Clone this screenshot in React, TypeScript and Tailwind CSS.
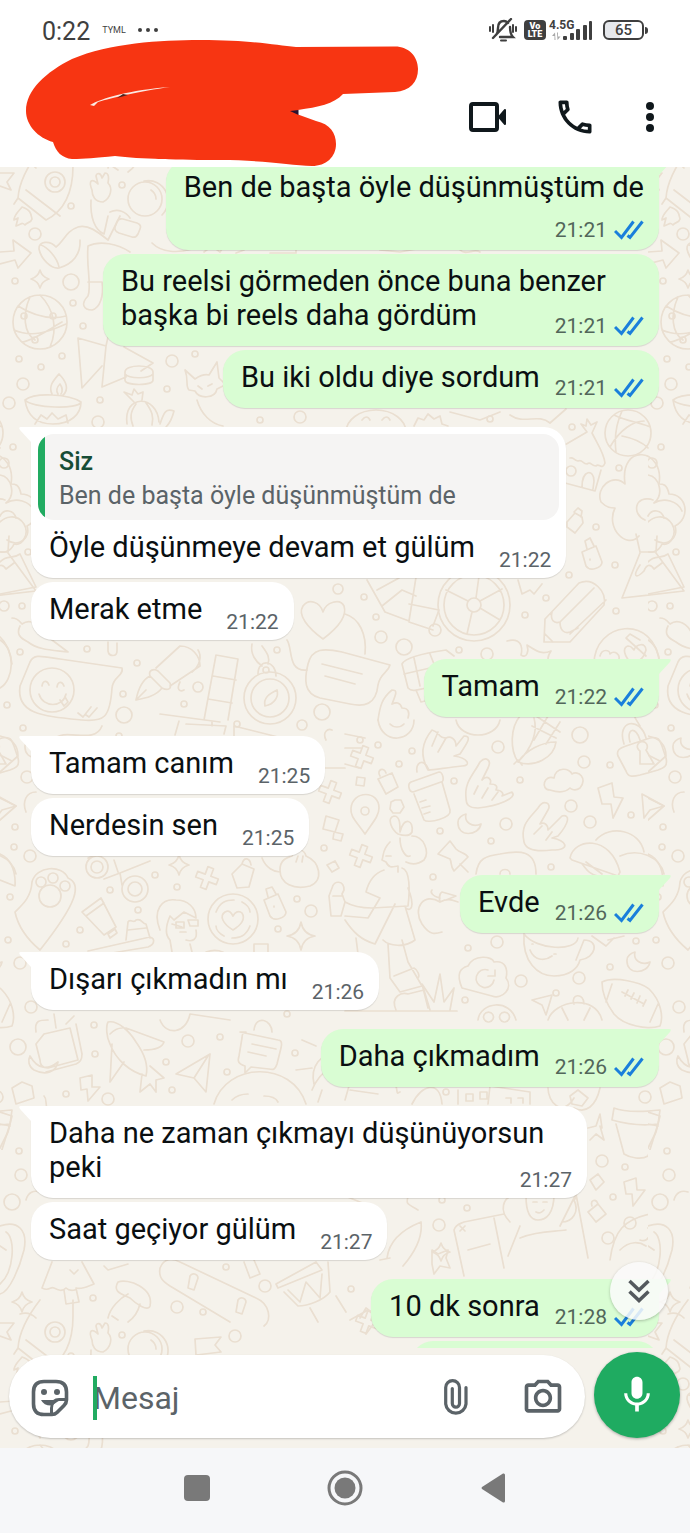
import React from 'react';
import { MdMic, MdOutlineCall, MdOutlinePhotoCamera } from 'react-icons/md';
import { clsx } from 'clsx';

interface Message {
  id: number;
  text: string;
  time: string;
  mine?: boolean;
  tail?: boolean;
  // time goes on a line of its own
  stacked?: boolean;
  quote?: { author: string; text: string };
}

const MESSAGES: Message[] = [
  { id: 1, text: 'Ben de başta öyle düşünmüştüm de', time: '21:21', mine: true, tail: true, stacked: true },
  { id: 2, text: 'Bu reelsi görmeden önce buna benzer başka bi reels daha gördüm', time: '21:21', mine: true },
  { id: 3, text: 'Bu iki oldu diye sordum', time: '21:21', mine: true },
  {
    id: 4,
    text: 'Öyle düşünmeye devam et gülüm',
    time: '21:22',
    tail: true,
    quote: { author: 'Siz', text: 'Ben de başta öyle düşünmüştüm de' }
  },
  { id: 5, text: 'Merak etme', time: '21:22' },
  { id: 6, text: 'Tamam', time: '21:22', mine: true, tail: true },
  { id: 7, text: 'Tamam canım', time: '21:25', tail: true },
  { id: 8, text: 'Nerdesin sen', time: '21:25' },
  { id: 9, text: 'Evde', time: '21:26', mine: true, tail: true },
  { id: 10, text: 'Dışarı çıkmadın mı', time: '21:26', tail: true },
  { id: 11, text: 'Daha çıkmadım', time: '21:26', mine: true, tail: true },
  { id: 12, text: 'Daha ne zaman çıkmayı düşünüyorsun peki', time: '21:27', tail: true },
  { id: 13, text: 'Saat geçiyor gülüm', time: '21:27' },
  { id: 14, text: '10 dk sonra', time: '21:28', mine: true, tail: true }
];

/* ---------- wallpaper ---------- */

// [x, y, radius]
const DOTS = [
  [71, 206, 3], [35, 234, 6], [122, 185, 3], [15, 281, 3], [71, 282, 8], [73, 303, 3], [83, 326, 3], [19, 359, 3],
  [62, 356, 3], [41, 367, 3], [23, 384, 6], [9, 403, 6], [100, 400, 3], [195, 354, 3], [172, 361, 6], [167, 389, 3],
  [98, 422, 6], [13, 447, 3], [4, 463, 5], [28, 552, 3], [4, 606, 5], [22, 606, 3], [20, 652, 3], [87, 649, 3],
  [137, 663, 3], [198, 687, 5], [123, 694, 3], [184, 704, 3], [7, 705, 3], [124, 715, 8], [237, 724, 3], [277, 650, 3],
  [338, 589, 5], [322, 712, 8], [490, 419, 3], [572, 427, 3], [619, 468, 3], [596, 527, 3], [615, 565, 3],
  [569, 575, 3], [546, 598, 3], [525, 615, 3], [616, 611, 3], [364, 597, 3], [376, 617, 3], [381, 637, 6],
  [404, 647, 8], [459, 650, 3], [487, 654, 6], [23, 728, 3], [119, 736, 3], [27, 777, 6], [15, 827, 3], [14, 847, 3],
  [30, 856, 6], [302, 725, 5], [10, 897, 3], [155, 875, 3], [110, 890, 3], [177, 887, 3], [138, 910, 3], [80, 930, 3],
  [66, 944, 3], [8, 940, 3], [297, 899, 3], [311, 911, 6], [278, 929, 3], [324, 848, 3], [20, 963, 6], [31, 1007, 6],
  [287, 1014, 3], [378, 745, 3], [412, 751, 3], [399, 764, 3], [454, 781, 3], [498, 747, 6], [580, 735, 8],
  [584, 762, 6], [610, 765, 3], [520, 780, 3], [506, 824, 6], [571, 806, 6], [590, 822, 6], [631, 815, 3],
  [491, 841, 3], [440, 831, 3], [433, 877, 3], [551, 867, 3], [497, 942, 6], [468, 948, 3], [636, 941, 3],
  [610, 967, 3], [521, 981, 6], [579, 978, 6], [556, 993, 3], [465, 1000, 3], [94, 1025, 3], [188, 1041, 6],
  [220, 1037, 3], [18, 1047, 8], [95, 1054, 3], [166, 1062, 3], [227, 1072, 3], [295, 1053, 3], [66, 1094, 3],
  [172, 1090, 3], [108, 1099, 6], [446, 1092, 3], [645, 1097, 6], [19, 1151, 3], [21, 1175, 6], [12, 1202, 8],
  [602, 1161, 6], [625, 1167, 3], [613, 1197, 3], [442, 1200, 3], [467, 1208, 3], [439, 1225, 6], [630, 1223, 6],
  [608, 1238, 6], [226, 1267, 3], [93, 1298, 3], [265, 1286, 6], [177, 1307, 6], [203, 1312, 3], [351, 1289, 3],
  [400, 240, 3], [600, 240, 3], [260, 420, 3], [300, 417, 6], [360, 740, 3], [235, 1336, 6]
];

// line shapes in absolute wallpaper coordinates
const LINES = [
  // star and rocket
  'M0 173l14 0-7 9 4 8-11-4',
  'M40 150C26 168 19 184 18 198L46 220C62 212 73 195 73 166V150M18 198l-4 6M26 190l34 26M65 182a10 10 0 1 1-20 0 10 10 0 0 1 20 0M60 182a5 5 0 1 1-10 0 5 5 0 0 1 10 0',
  'M22 207c-4 5-8 8-8 13l4-2-2 8c6-2 6-4 9-1 2-3 6-2 7-6-1-5-1-9-10-12z',
  // astronaut
  'M92 190C88 180 92 178 98 184L96 176c1-4 5-3 6 2l3-5c4 0 4 5 3 10 5 5 3 15-5 19-8 0-11-6-11-12z',
  'M162 199a17 17 0 1 1-34 0 17 17 0 0 1 34 0M144 181c20-4 32 20 18 34M151 190c3 2 5 5 5 9',
  'M91 200c-1 18 4 30 13 34l4-18M110 212c8-4 16 0 20 6M120 216l-12 24c-10-8-20-16-30-13-12 4-14 14-22 20-6-7-18-6-17 2 2 10 12 20 20 19 14-4 22-14 21-28',
  'M117 222q1-4 6-3l14 4q5 2 3 6l-2 5q-2 4-6 3l-13-4q-5-2-4-6zM41 245c6 2 16 12 18 22M88 246c12-6 30-2 42 6M88 246c-2 20 4 40 0 50-8 8-4 14 4 14 8-2 12-14 10-28h-14M152 243c10 10 26 10 40 6',
  // arrow, globe
  'M0 252L14 251 13 240 31 253 18 268 15 260 0 264',
  'M67 322a27 27 0 1 1-54 0 27 27 0 0 1 54 0M18 306c16 10 32 14 48 10M14 330c18 8 34 2 52-6M30 297c-8 18-6 36 5 43M40 295c14 14 18 34 10 52M22 342c12-2 26-12 40-20',
  'M27 316a3 3 0 1 1-6 0 3 3 0 0 1 6 0M56 316a3 3 0 1 1-6 0 3 3 0 0 1 6 0M38 340a3 3 0 1 1-6 0 3 3 0 0 1 6 0',
  // book, cup, oil lamp
  'M78 338l28 8-4 41 24-10M78 338l4 50 20-22M106 346l2-9M124 347l29 16-12 8M125 372c0-8 28-8 28 0v8c0 6-28 6-28 0zM125 374c4 5 24 5 28 0',
  'M25 400c10-8 44-6 56 2-2 8-50 6-56-2 2 14 10 24 28 24s28-10 28-22M52 394c-4-8 2-14 7-20 8 8 10 16 4 21M58 394c-3-5 0-8 2-10 2 3 3 7 1 10M35 424l6-9 6 4 5-6 6 6 8-4 2 8',
  // cactus, fox
  'M127 424c-4-30 30-30 32-2M134 402l-10-10 8 3 2-6 4 5 5-2-1 8M136 404c-6 8-6 14-3 22M146 403c6 8 8 14 6 22M160 424c4-12 6-16 14-13-2 8-4 12-8 16',
  'M185 370l10 9c6-4 10-5 14-4l8-13 2 16 8 8M185 370c4 10 0 16 4 20l6 1c4 8 20 8 22-2l6-3M198 386l4 3M208 386l4-2M197 400c4 14 14 24 26 26',
  // odds and ends around the outgoing messages
  'M204 252l8-6 8 6 4-6M244 250l-8 3M270 253h26v-6M380 250l20 2 22-4M460 250c6 6 14-2 20 2',
  // smiley, gear
  'M346 432a30 22 0 0 1 60 0M362 420c3-4 6-4 8 0M382 420c3-4 6-4 8 0M414 426l4-8 6 2 4-6 6 5 6-3 2 8 6 2M510 415c14 10 28-2 40 8l16-14M450 412l30 8 20-8',
  // basketball, house
  'M651 433a23 23 0 1 1-46 0 23 23 0 0 1 46 0M614 415c12 6 28 8 36 12M610 447c10-18 24-26 34-26M616 452c-2-16 0-28 6-41M622 436c10 2 20 6 26 12',
  'M563 446l24-14-6-8 5 2 1-7 4 6 6-3-5 11c6 12 12 20 13 30-3 8-6-1-9 3-5 0-5-5-9-2-5 0-4-5-9-3-5-1-4-4-8-3M601 470l-6 21-30-8M576 471a5 5 0 1 1-10 0 5 5 0 0 1 10 0M582 487c0-18 12-18 12-6l-1 8',
  // tree on a hill
  'M655 540c12 8 24-2 20-14 16-8 12-32-6-32-2-10-6-10-10-10 6-36-40-42-34 0-12-12-30 4-24 18 6 6 10 6 14 6-10 20 12 42 24 28M645 520c-14-6-10-26 8-20M648 516c4-8 14-6 16 2M636 534l4 18h16l1-16',
  'M640 553l-18 45 62-7-28-38M640 565c-8 12-4 14 4 6 2-6 6-8 10-2l8-6',
  // bottle tags
  'M567 522l8-9 7 4 1 6-8 10-8-6zM574 512l4-4 4 3-1 6M582 552l14-6 6 16c0 6-12 10-16 4zM587 549l-2-8 5-3 4 8M590 559v1',
  // microscope, wheel
  'M367 580l18 32 24 9 8-50M377 590l22-12M382 606l20-16 14 6M409 604l30 6-6 16M409 622l24 8M441 630a6 6 0 1 1-12 0 6 6 0 0 1 12 0',
  'M510 605a36 36 0 1 1-72 0 36 36 0 0 1 72 0M504 605a30 30 0 1 1-60 0 30 30 0 0 1 60 0M481 605a7 7 0 1 1-14 0 7 7 0 0 1 14 0M480 601l22-12M480 608l20 12M472 612l-5 22M468 601l-22-11M476 598l3-22',
  // pencil
  'M544 642l1-23 34-36c14-6 28 8 25 22l-34 37zM552 612c-2 8 2 12 8 10 0 8 4 12 10 10l8-4M560 622l34-34M570 634l36-34M545 634l8 8M518 580l4 14 8-4 4 4 8-10',
  // flame, love face, target
  'M507 641c14-4 16 6 14 14 6 4 8-4 6-10 10 6 14 10 24 6-4 6-4 10 0 12',
  'M594 664c0-42 60-52 66 0M632 664c-8-8-10-16-4-18 4 0 4 2 6 4 2-6 12-8 12 0-2 8-6 12-14 14zM600 656c2-8 10-6 10-2 4-4 12 0 8 8',
  'M640 682c-10 6-14 24 0 44M640 640l-10-6-4 4 20 18',
  // waffle and snow lolly
  'M402 664c4-8 30-12 44-14l8 6M402 664l6 24c4 4 8 2 18 0M414 658l6 28M430 654l4 10M404 674l26-6M416 690l5 12 8-2-3-11',
  // cloud at the left, mountain
  'M0 475c12 2 16 20 6 28 10-6 24-2 28 8M0 522c4-4 16-10 24 2 6 10-2 22-10 20-4 10-14 8-14 8M0 562c8-8 12-2 20-8l16 33-36 7',
  // carrot and smiling balloon
  'M12 618c6 0 8 4 10 6 8-6 18 0 22 10l24 18c-16-2-30-2-40-10-8-4-12-8-8-16M0 640c16 10 14 40 0 48M108 642v9c1 6 9 6 9 0v-8',
  'M30 662c4-8 10-6 30-3l62 9c2 8-9 8-10 20-2 30-8 34-30 32-40-4-66-6-62-34zM74 690a22 22 0 1 1-44 0 22 22 0 0 1 44 0',
  'M42 686c1-6 5-6 7-1M57 687c1-6 5-6 7-1M39 694c4 14 24 14 27 0M60 700l4 6 4-4-3-5M78 713l5 4 8-10M86 715l3 2 8-9',
  // fountain pen, ruler, compass
  'M136 700c2-10 6-20 14-24l12 12c-6 8-16 10-26 12zM136 700l10-10M150 676c-2-6 4-8 8-5l12 12c2 6-2 8-8 5M156 668l24-22c12 0 20 10 20 20l-30 20M198 650c4 6 2 16-6 22M180 682c-4 8 0 10 4 8',
  'M216 655l22 4-10 61M216 655l-12 65M213 676l23 4M208 699l24 4M160 714l60 8',
  'M296 698a26 26 0 1 1-52 0 26 26 0 0 1 52 0M289 698a19 19 0 1 1-38 0 19 19 0 0 1 38 0M265 706c-2-8 4-12 12-16 2 6-2 14-12 16zM258 674c0-16 18-14 18 2M252 644c-2 10 4 18 10 22M262 646c6 8 8 12 6 18M269 670a3 3 0 1 1-6 0 3 3 0 0 1 6 0M287 640c6 8 0 32 20 30',
  // heart, note balloon
  'M323 639c-15-11-26-24-20-33 6-8 17-4 20 6 3-10 17-14 21-6 4 12-9 24-21 33z',
  'M308 664c4-16 16-16 34-12l48 13c-2 8-10 8-12 20-2 20-14 22-28 19l-30-6c-16-4-16-18-12-34zM322 664l40 10M325 676l30 8M345 614c14 4 22 20 20 40',
  // hand
  'M378 720c2-14 4-22 14-30 6 0 4 4 0 14M392 704c4-2 8-2 10 4 6 0 8 4 6 10',
  // left edge, around the middle
  'M0 736c10 2 18 8 18 20l-18 16M0 755l12 6M0 798l16 8-16 14M0 854c10 4 16 16 15 32L0 880M26 812c-4-10 0-20 10-20M54 740c10-14 40 6 48-14',
  'M175 735l4-14M186 724l40 2-2 8M234 740v-14l56 14M212 722v4M326 740c-4-8 2-12 6-10M325 768h20',
  // paw, tube, brush
  'M15 912c7-7 16-14 17-30 4-16 30-18 36-4 14 6 10 24-28 72-12-10-22-24-25-38zM61 896a11 11 0 1 1-22 0 11 11 0 0 1 22 0M46 882a5 5 0 1 1-10 0 5 5 0 0 1 10 0M58 878a5 5 0 1 1-10 0 5 5 0 0 1 10 0M70 886a5 5 0 1 1-10 0 5 5 0 0 1 10 0',
  'M82 912l19-14 15 29-12 8zM86 916l18-13M108 934l7-5 2 4-7 5zM88 951l62-14c6 2 4 8-2 10l-60 10M126 940l2-18c2-4 6 2 8-2 6-2 6 4 10 4l4 14M128 930l18-2',
  // camera film
  'M108 867a11 11 0 1 1-22 0 11 11 0 0 1 22 0M103 867a6 6 0 1 1-12 0 6 6 0 0 1 12 0M148 889a13 13 0 1 1-26 0 13 13 0 0 1 26 0M142 889a7 7 0 1 1-14 0 7 7 0 0 1 14 0M88 858l10-4M104 879l16-6 30-12M114 860l4 12M120 873l2 12',
  // boy
  'M160 930c-8-20 2-32 16-30 12 0 20 8 20 18l-12-6-10 8-4-4c-6 14-4 20 0 24l2 12M172 924l10 3M176 922h8v6h-8zM188 920h10v6h-8zM196 930c2 10-4 12-10 10M190 944l2 8M206 952c10-4 18 0 20 2M180 932h6',
  // love coin
  'M258 919a25 25 0 1 1-50 0 25 25 0 0 1 50 0M216 912c4-10 10-12 18-12M250 926c-4 10-10 12-18 12M250 912c0-4-4-8-8-10M216 926c0 4 4 8 8 10M233 930c-10-6-14-14-8-18 4-2 6 0 8 4 2-4 6-6 9-3 4 6-1 12-9 17z',
  // small tags
  'M232 874l10-10 12 5-5 18-12 1zM242 864c2-8 8-6 9 1M264 900l14-6 8 18c0 6-12 10-16 4zM268 897l-2-8 6-2 4 7M274 906v1M254 952v-8h14v8',
  // dumpling, bottle
  'M280 870c0-10 6-12 12-14 2-8 12-8 14 0 14 6 18 24 4 30-16 4-30-2-30-16zM296 862l2-6M302 862l1-6M262 858c4 10 12 14 18 14M332 888c2-8 12-8 12 2l-2 4 3 8-4 14h-10l-2-20zM333 896h10',
  'M345 748h16M345 764l14 4',
  // three hands
  'M428 770c-8-14-6-28 4-40 8 2 6 8 14 8 4-2 10 0 10 8l8-10c8 0 4 6-4 18l-6 2c14 2 18 10 8 10-18 2-28 4-34 4zM438 732l-6 14M446 738l-8 14',
  'M466 798c-2-16 8-24 14-36 6-6 12-2 8 6l-6 12M482 780c6-6 10 0 8 4 6 0 8 2 6 6 6 0 8 4 6 6l10-4c6 6-14 14-34 16-10 0-12-4-12-10M478 786l-4 8M488 788l-6 10M498 792l-6 8',
  'M524 842c-4-18 6-24 14-34 6-10 14-4 10 2l-8 14c4-2 8 0 8 6l14-14c8-2 8 6-4 20l-6 2c14 2 20 12 0 12-16 2-26 0-28-8M542 826l-8 8M552 832l-6 8',
  // corn
  'M518 762c-8-12-8-34 2-46M518 762c16 6 36-4 38-20-14 0-30 8-38 20zM518 762c14-14 20-30 16-44M534 740l14-24M546 744l14-22M532 726l24 12M536 716l24 16M514 764l4-4 4 5',
  // pacifier face
  'M378 720c4 26 36 22 36 0M456 720c4 20 40 20 44 0M390 724c4 4 10 4 14 0',
  // bottle, cloud, bolt, cursor, padlock
  'M413 792l28-10c4 0 2-10-2-10l-28 10c-4 2-2 10 2 10zM417 772c-2-8 6-16 12-2M414 794l10 26c4 4 28-2 26-10l-8-28M420 802l6-2M422 808l8-2M424 814l6-2',
  'M550 790c-10 0-6-16 4-12 2-12 16-10 18-4 6-4 16 4 8 14-6 4-10 0-10 0-6 6-14 4-20 2z',
  'M598 788l14-5 2 14 9 1-10 20-2-14-9 0zM642 794l22 12-14 4-6 8zM532 1000l20-5-6 20-4-10z',
  'M618 756c-2-6 2-8 8-10l24-8c8-2 10 2 12 8l4 12c2 8-2 10-8 12l-18 5c-8 2-12 2-14-4zM624 744c-8-24 16-28 22-6M630 742c-4-14 6-16 10-2M640 764h14l-8-14a5 5 0 1 0-6 1z',
  // map pin, hexagon, squares
  'M365 834c-10-14-15-18-14-26 2-18 28-18 28 0 0 8-6 14-14 26zM369 811a4 4 0 1 1-8 0 4 4 0 0 1 8 0M391 802l4-2h6l3 7-4 6h-7l-3-4zM357 777l8 1-1 8-8-1zM378 779l14-6 6 14-12 7zM380 776c-4-6 4-10 6-3M326 816l13 4-4 12-12-3zM334 832l9 2-2 7-8-2zM327 865l8-4 4 7-7 4z',
  // push pin
  'M438 854l12-13 6 8c4 4 10 4 12 8l-14 14c-4-6-2-8-4-12zM460 864l8 8M345 734l20 4',
  // girl running by
  'M398 834c-6-4-12-16-4-18 6 0 6 8 6 16 4-16 14-12 12 0-2 4-8 4-14 2zM412 836c12 0 18 16 12 24-8 6-14 4-18 2M390 842c-8 8-6 12-8 18l4 2c4 8 8 4 12 4v6M400 838c0 12 6 20 10 18M386 856h5',
  'M384 870c-12 4-16 14-18 22l14 6M402 868c8 2 8 22 6 38l-36 2c-10 0-20-2-27-6M380 898l-12 20-23-2M345 920c8 12 16 20 30 24l20-40M408 888c8 20 2 24-2 20M405 906l10 34c-10 8-26 6-32 0M356 938l2 16M388 944l2 34 10 14 22-6-14-24-6-22M394 976l20-8c4 2 6 8 4 10M396 1010c-6-14 6-18 12-16l16-4 6 20M345 988c16-2 18 6 24 10M345 1011h112M428 1008l-6-24 12 18 6-28 4 28 10-14-4 22',
  // apple, umbrellas
  'M440 902c-16-10-28 6-18 22 8 12 14 10 20 8M440 902c8-4 12-2 18 0M440 902c-2-8 2-10 2-10l14 4-10 4M440 898c-8-2-10-6-8-8',
  'M570 858c4-20 40-24 50 14l-2 4-46-16zM596 840c14-16 44-10 48 12M620 856c18-8 40 0 44 18M582 864c4 4 6 10 16 12M586 862l16 12',
  'M476 874c2-16 10-18 24-20 20-4 36-4 36 20M500 874c0-6 10-6 10 0',
  // coffee cup
  'M524 934c-2 28 14 42 30 42 16 0 24-8 26-16 16-2 20-20 4-20l-8 20M524 934c12 16 52 18 54 4M532 944h1M554 954h2M530 950c4 10 14 12 22 6M592 936l14 10 8-8M608 940l16-4',
  // cloud, crescents, ball
  'M462 988c-6-14-2-20 6-22 6-12 24-10 26-4 12-2 14 8 12 16 8 10-4 22-14 18zM488 970a9 9 0 1 0 6 10M488 976h7v-6',
  'M466 814c-2 8 6 14 15 10-2 12-24 14-23-2 0-4 4-7 8-8zM635 952c-2 8 6 14 15 10-2 12-24 14-23-2 0-4 4-7 8-8zM681 738c-2 8 6 14 15 10-2 12-24 14-23-2 0-4 4-7 8-8z',
  'M602 982c12-6 40 0 48 8 10 10 14 26 10 36-12 4-36 0-46-12-6-8-12-20-12-32zM612 984l-6 18M658 1004l-8 18M622 992l22 12M628 990l-3 6M634 993l-3 6M640 996l-3 7M646 1000l-3 6',
  'M478 1020c2-18 32-22 38 0M488 1022a5 5 0 1 1 1 0M504 1022a5 5 0 1 1 1 0M548 1020c6-20 48-26 54 0M574 1004c-4-10 10-12 10 0M562 1008l6 12M590 1008l-6 12',
  // backpack, plane, paper plane
  'M36 1032c-2-12 4-12 12-12M76 1024l6 30c0 6-2 8-6 10l-30 8M36 1044l8-10 26-6 8 32-30 8c-6 0-8-4-8-8zM30 1056c8 14 18 14 28 6-2 10-12 14-24 8-6-4-6-10-4-14zM56 1028l-2-14M66 1024l8-8',
  'M108 1022c10-2 22 10 28 20 10 14 12 26 10 34-16-4-30-16-36-32-4-8-4-18-2-22zM110 1034c4-4 8-6 12-6M112 1044l-2 38 14-20M126 1028l38 14c-2 6-10 8-20 8M142 1074l-2 18 10-8 6 8 0-12 8-2-14-12M176 1074l34-20-4 38-12-14zM194 1078l14-22',
  'M240 1032l38 8c4 0 4 4 3 8l-4 16c-2 6-4 6-8 5l-18-2-6 6v-7c-6-2-8-4-6-10l3-18c0-4 2-6 4-6zM254 1030c2-16 18-10 18 2M252 1044l24 5M248 1052l18 4M160 1020c6 16 26 14 30-6l40 6',
  // sun, bolts, fish, banana bits
  'M312 1090c8-20 26-30 46-28M322 1090l-4 12M302 1040l14 6M296 1070l16-2M340 1050c-20 4-30 16-26 34M80 1078l12-3 0 12 8 0-12 14-1-12-6 1zM12 1088l10-6 10 4 2 12-18 6zM44 1096c4 4 0 8 4 14M214 1104c12-42 78-44 92 0M232 1100c4-4 10-6 16-6M264 1096c6 0 12 2 14 6',
  'M0 1112l12 4-4 16-8 16M0 1124l10 2',
  // houses
  'M345 1100l4-14M350 1090l28 4M396 1086c2 8 0 8 4 6M412 1104c10-20 28-24 30 0M458 1104v-14M466 1094h7v7h-7zM480 1092h7v7h-7zM488 1104l2-18 40 6v12M506 1098h5v5M518 1098h5v5M570 1096l8-6 10 8-6 8-10-2zM548 1088c0 14 14 30 26 10M600 1088c-4 18-14 26-26 20',
  // plant pot, star, tags
  'M614 1108c10 4 28 4 46 2l-2 14c-16 2-32 0-46-4zM616 1124l8 30c6 4 18 6 24 2l10-32M588 1128l8-2 4-12 2 14M590 1140l6-6 8 6-4-14M590 1180l8-6 6 8-8 8zM588 1212l10-8 8 10-10 8zM592 1206c-2-6 4-8 6-2M624 1182l12-4 1 12 8 0-12 16-1-12-6 0z',
  // curly head girl
  'M510 1222c-12-12-6-24 2-26-2-10 6-16 12-16M566 1182c12 2 12 16 8 18 6 12-2 22-12 22M526 1196c0 20 6 24 12 24 8 0 16-6 16-26M533 1202h4M543 1202h4M536 1212c4 2 6 0 8-2M520 1226l-12 30M560 1226l16-32 12 64M520 1238c20-8 34-6 46-8',
  'M454 1230c2-6 6-6 10-8l40-8M454 1230l10 46M460 1226l5 5M465 1226l-5 5M468 1250l22-6M494 1218l10 50M345 1196l30 12M410 1190c-4 14-6 12 8 20',
  // big cat, rocket left
  'M610 1260c4-30 14-40 40-46M648 1228l22-16M620 1250c10-10 20-8 26-4M640 1240c6 2 8-2 8-2M387 1258c2-16 14-28 34-36 2 16-6 30-18 44M380 1260l10-2M432 1250l6 4 10-4-2 8 4 10-10-2-6 8-2-10z',
  // lower left: nut, tree, mushroom
  'M0 1226c18-6 28 4 24 24-4 16-14 42-24 44M0 1246l6 4M6 1232c10 6 8 40-6 52M26 1200c2-8 8-10 14-8M52 1262l-10 26c8 4 8-2 12 0s8 4 12 0c4 4 12 2 10 0 6 2 12-2 18-4l-12-22M64 1290l2 14 13-2-3-14M70 1270l4 4 4-4',
  'M118 1282c10-4 36 6 32 24-2 6-14-2-20-8-8-4-18-6-12-16zM128 1294c-8 4-18 14-20 24M140 1304c-2 8-6 14-12 18M104 1266l4 4 20-6M112 1316l6 4',
  // skateboard, drum
  'M160 1268c4-10 12-10 20-6l76 36c14 6 16 22 8 28M160 1268c-2 10 4 14 10 18l60 36M188 1288l2-12c2-4 8-2 8 2l-4 12zM236 1312l2-12c2-4 8-2 8 2l-4 12zM244 1262l6 16 10-4-6-14M276 1284l40-22 6 8-44 18zM284 1292l14 14c10 0 26-6 32-14l-2-30M288 1290l12 12 6-20 14 16 2-24M310 1308l8 14M336 1296l10 16',
  'M350 1320l18-10 10 8-12 16M360 1318l6-10 8 6',
  'M20 1314c6-2 12 0 16 4M195 1339l26-2-6 8 6 7-25 3z'
];

// four pointed stars: [x, y, size]
const SPARKS = [[40, 279, 9], [301, 936, 14], [179, 865, 10], [22, 1302, 10], [441, 1252, 9]];
const CROSSES = [[330, 792], [207, 878], [362, 757], [361, 856], [367, 1322]];

const Wallpaper = () => (
  <svg className="absolute inset-0 h-full w-full" aria-hidden="true">
    <defs>
      <pattern id="doodles" width="648" height="1150" patternUnits="userSpaceOnUse" patternTransform="translate(0 -167)">
        {/* shapes cross the tile edges, so the set is repeated to close the seams */}
        {[[0, 0], [0, -1150], [-648, 0]].map(([dx, dy]) => (
          <g
            key={`${dx}${dy}`}
            transform={`translate(${dx} ${dy})`}
            fill="none"
            stroke="#eadfd1"
            strokeWidth="1.7"
            strokeLinecap="round"
            strokeLinejoin="round"
          >
            {DOTS.map(([x, y, r]) => <circle key={`${x}-${y}`} cx={x} cy={y} r={r} />)}
            {LINES.map(d => <path key={d} d={d} />)}
            {SPARKS.map(([x, y, s]) => (
              <path
                key={`${x}-${y}`}
                d={`M${x} ${y - s}Q${x + 2} ${y - 2} ${x + s} ${y}Q${x + 2} ${y + 2} ${x} ${y + s}Q${x - 2} ${y + 2} ${x - s} ${y}Q${x - 2} ${y - 2} ${x} ${y - s}Z`}
              />
            ))}
            {CROSSES.map(([x, y]) => (
              <path
                key={`${x}-${y}`}
                transform={`translate(${x} ${y}) rotate(20)`}
                d="M-3-11h6v8h8v6h-8v8h-6v-8h-8v-6h8z"
              />
            ))}
          </g>
        ))}
      </pattern>
    </defs>
    <rect width="100%" height="100%" fill="url(#doodles)" />
  </svg>
);

/* ---------- status bar and header ---------- */

const StatusBar = () => (
  <div className="flex h-[60px] items-center justify-between pr-[42px] pl-[42px] text-[#3f3f3f]">
    <div className="flex items-center">
      <span className="pt-1 text-[25px] leading-8">0:22</span>
      <span className="ml-3 text-[9px] leading-4">TYML</span>
      <svg width="20" height="6" viewBox="0 0 20 6" fill="currentColor" className="ml-3" aria-hidden="true">
        <circle cx="2" cy="3" r="2" />
        <circle cx="10" cy="3" r="2" />
        <circle cx="18" cy="3" r="2" />
      </svg>
    </div>
    <div className="flex items-center">
      <svg width="28" height="24" viewBox="0 0 28 24" fill="none" stroke="currentColor" strokeWidth="2" strokeLinecap="round" aria-hidden="true">
        <path d="M7 17c2-2 2-4 2-7 0-4 2-7 6-7 2 0 3 1 4 2M21 9c0 5 1 8 3 10H11M4 20L22 1" strokeWidth="2.4" />
        <path d="M12 22.500h5M1 9v4M4 7v7M24 7v7M27 9v4" />
      </svg>
      <span className="ml-[7px] flex h-[20px] w-[22px] flex-col items-center justify-center rounded bg-[#3f3f3f] text-[9px] leading-[8px] font-black text-white">
        <span>Vo</span>
        <span>LTE</span>
      </span>
      <span className="ml-[3px] flex h-[22px] w-[46px] items-start">
        <span className="text-[12px] leading-[12px] font-bold">4.5G</span>
        <svg width="40" height="22" viewBox="0 0 40 22" fill="currentColor" className="-ml-[22px] shrink-0" aria-hidden="true">
          <path d="M3 13.500L0 17H2.500V21H3.500ZM5.500 21L8.500 17.500H6V13.500H5Z" opacity=".45" />
          <rect x="11" y="17" width="4" height="4" rx="1" />
          <rect x="18" y="14" width="4" height="7" rx="1" />
          <rect x="24" y="10" width="4" height="11" rx="1" />
          <rect x="31" y="6" width="4" height="15" rx="1" />
          <rect x="37" y="2" width="3" height="19" rx="1" />
        </svg>
      </span>
      <span className="ml-2 flex h-5 w-[41px] items-center justify-center rounded-[6px] border-2 border-current bg-linear-to-r from-gray-200 from-40% to-white to-40% text-[15px] leading-4 font-medium">
        65
      </span>
      <span className="ml-px h-[7px] w-[3px] rounded-r bg-current" />
    </div>
  </div>
);

// name and avatar painted over by hand
const Scribble = () => (
  <svg className="pointer-events-none absolute top-10 left-6" width="396" height="128" viewBox="24 40 396 128" aria-hidden="true">
    <path
      fill="#f73512"
      d="M26 111C26 90 46 72 72 59C110 43 160 40 200 40C250 40 275 45 296 47L394 46.500C408 46 418 56 418 69C418 82 410 91 395 92L343 94C334 104 318 107 298 110L298 114.500L316 121C330 124 336 133 336 144C336 157 326 166 312 166C290 165 260 160 220 160C180 160 140 159 115 156C95 158 85 159 72 159C62 158 56 152 53 142C38 138 26 125 26 111Z"
    />
    <path fill="#2a1230" d="M290 111L298.500 110V115Z" />
    <path fill="#fbe9e2" d="M90 105C102 98 130 90 170 87C140 91 112 98 98 102L94 106Z" />
    <path fill="#4a2320" d="M117 98L123 94L128 95Z" />
  </svg>
);

const Header = () => (
  <header className="relative shrink-0 bg-white">
    <StatusBar />
    <div className="flex h-[107px] items-center justify-end pt-[7px] pr-7 text-[#10181c]">
      <button aria-label="Görüntülü arama">
        <svg width="38" height="30" viewBox="0 0 38 30" fill="none" stroke="currentColor" strokeLinejoin="round" aria-hidden="true">
          <rect x="2" y="2" width="26" height="26" rx="2" strokeWidth="4" />
          <path d="M30 15L36 8V22Z" fill="currentColor" strokeWidth="2" />
        </svg>
      </button>
      <button aria-label="Sesli arama" className="ml-[46px]">
        <MdOutlineCall size={44} />
      </button>
      <button aria-label="Diğer seçenekler" className="ml-[41px] px-2">
        <svg width="8" height="30" viewBox="0 0 8 30" fill="currentColor" aria-hidden="true">
          <circle cx="4" cy="4" r="4" />
          <circle cx="4" cy="15" r="4" />
          <circle cx="4" cy="26" r="4" />
        </svg>
      </button>
    </div>
    <Scribble />
  </header>
);

/* ---------- messages ---------- */

const Ticks = () => (
  <svg width="30" height="20" viewBox="0 0 30 20" fill="none" stroke="#1a7fdb" strokeWidth="3" aria-label="Okundu" role="img">
    <path d="M1 11L7.500 17.500L19.500 1.500M13.500 15.500L16 17.500L28.500 1.500" />
  </svg>
);

const Tail: React.FC<{ mine?: boolean }> = ({ mine }) => (
  <svg
    width="13"
    height="15"
    viewBox="0 0 13 15"
    className={clsx('absolute top-0', mine ? '-right-3 text-[#d9fdd3]' : '-left-3 -scale-x-100 text-white')}
    aria-hidden="true"
  >
    <path fill="currentColor" d="M0 0H11Q14 0 12 3L1 15H0Z" />
  </svg>
);

const Bubble: React.FC<{ message: Message; gap: string }> = ({ message, gap }) => {
  const { text, time, mine, tail, stacked, quote } = message;

  return (
    <li
      className={clsx(
        'relative max-w-[556px] rounded-[22px] shadow-[0_1px_1px_rgba(0,0,0,0.12)]',
        gap,
        mine ? 'self-end bg-[#d9fdd3]' : 'self-start bg-white',
        tail && (mine ? 'rounded-tr-none' : 'rounded-tl-none')
      )}
    >
      {tail && <Tail mine={mine} />}
      {quote && (
        <div className="px-[7px] pt-[7px]">
          <blockquote className="flex overflow-hidden rounded-2xl bg-[#f5f4f3] text-[25px] leading-[34px]">
            <span className="w-[7px] shrink-0 bg-[#21ab61]" />
            <div className="pt-[11px] pb-[7px] pl-[14px]">
              <p className="font-medium text-[#174d36]">{quote.author}</p>
              <p className="text-[#5b6368]">{quote.text}</p>
            </div>
          </blockquote>
        </div>
      )}
      <div
        className={clsx(
          'flow-root pt-[10px] pr-[15px] pl-[18px] text-[29px] leading-[34px] text-[#0a0f11]',
          mine ? 'pb-[7px]' : 'pb-[5px]'
        )}
      >
        {stacked ? <p>{text}</p> : text}
        <span
          className={clsx(
            'float-right flex items-center gap-[7px] text-[21px] leading-[26px]',
            mine ? 'ml-[15px] text-[#52665a]' : 'ml-6 text-[#5b6368]',
            stacked ? 'mt-[13px]' : mine ? 'mt-[15px]' : 'mt-[17px]'
          )}
        >
          <time>{time}</time>
          {mine && <Ticks />}
        </span>
      </div>
    </li>
  );
};

const MessageList = () => (
  <div className="relative min-h-0 flex-1 overflow-hidden">
    <ul className="-mt-[7px] flex flex-col px-[31px]">
      {MESSAGES.map((message, i) => (
        <Bubble key={message.id} message={message} gap={i === 0 ? 'mt-0' : message.tail ? 'mt-[19px]' : 'mt-1'} />
      ))}
      {/* next message, still below the fold */}
      <li className="mt-1 h-14 w-[248px] self-end rounded-[22px] bg-[#d9fdd3]" aria-hidden="true" />
    </ul>
    <button
      aria-label="En alta in"
      className="absolute right-[22px] bottom-7 flex size-[58px] items-center justify-center rounded-full bg-[#fafafa]/85 text-[#54595d] shadow-[0_1px_3px_rgba(0,0,0,0.25)]"
    >
      <svg width="22" height="24" viewBox="0 0 22 24" fill="none" stroke="currentColor" strokeWidth="3.500" aria-hidden="true">
        <path d="M1.500 2L11 11L20.500 2M1.500 12.500L11 21.500L20.500 12.500" />
      </svg>
    </button>
  </div>
);

/* ---------- composer ---------- */

const StickerIcon = () => (
  <svg width="38" height="38" viewBox="0 0 38 38" fill="none" stroke="currentColor" strokeWidth="3.600" aria-hidden="true">
    <path d="M13 2.500H25Q35.500 2.500 35.500 13V21Q35.500 24 33 26.500L26 33.500Q24 35.500 21 35.500H13Q2.500 35.500 2.500 25V13Q2.500 2.500 13 2.500Z" />
    <path d="M20.500 35V29Q21 20 29 20.500H35" strokeWidth="3" />
    <path d="M10 21H29L21 26.500Q13 27 10 21Z" fill="currentColor" stroke="none" />
    <circle cx="13" cy="13" r="3" fill="currentColor" stroke="none" />
    <circle cx="26" cy="13" r="3" fill="currentColor" stroke="none" />
  </svg>
);

const Composer = () => (
  <div className="relative flex shrink-0 items-end gap-[9px] pt-1 pr-[10px] pb-[10px] pl-[9px]">
    <div className="flex h-[83px] min-w-0 flex-1 items-center rounded-full bg-white pt-[2px] pr-5 pl-[22px] text-[#5b6368] shadow-[0_1px_2px_rgba(0,0,0,0.2)]">
      <button aria-label="Çıkartma" className="shrink-0">
        <StickerIcon />
      </button>
      <span className="z-10 -mr-1 ml-6 h-11 w-1 shrink-0 bg-[#21ab61]" />
      <input
        type="text"
        aria-label="Mesaj"
        placeholder="Mesaj"
        className="min-w-0 flex-1 bg-transparent text-[32px] leading-[44px] outline-none placeholder:text-[#5b6368]"
      />
      <button aria-label="Dosya ekle" className="shrink-0">
        <svg width="24" height="37" viewBox="0 0 24 37" fill="none" stroke="currentColor" strokeWidth="3.200" strokeLinecap="round" aria-hidden="true">
          <path d="M22 8.500V25A10.200 10.200 0 0 1 1.700 25V8.500A6.900 6.900 0 0 1 15.500 8.500V24.500A3.600 3.600 0 0 1 8.300 24.500V9.500" />
        </svg>
      </button>
      <button aria-label="Kamera" className="ml-[53px] shrink-0">
        <MdOutlinePhotoCamera size={44} />
      </button>
    </div>
    <button
      aria-label="Sesli mesaj"
      className="flex size-[86px] shrink-0 items-center justify-center rounded-full bg-[#1fab61] text-white shadow-[0_1px_3px_rgba(0,0,0,0.3)]"
    >
      <MdMic size={44} />
    </button>
  </div>
);

const NavBar = () => (
  <nav className="flex h-[85px] shrink-0 items-center justify-center bg-[#f6f7f9] pb-[6px] text-[#797979]">
    <button aria-label="Son uygulamalar" className="flex w-[148px] justify-center">
      <span className="size-[26px] rounded bg-current" />
    </button>
    <button aria-label="Ana ekran" className="flex w-[148px] justify-center">
      <svg width="36" height="36" viewBox="0 0 36 36" aria-hidden="true">
        <circle cx="18" cy="18" r="16" fill="none" stroke="currentColor" strokeWidth="3" />
        <circle cx="18" cy="18" r="10.500" fill="currentColor" />
      </svg>
    </button>
    <button aria-label="Geri" className="flex w-[148px] justify-center">
      <svg width="24" height="30" viewBox="0 0 24 30" fill="currentColor" aria-hidden="true">
        <path d="M1 14Q0 15 1 16L22 29.500Q24 30 24 28V2Q24 0 22 .5Z" />
      </svg>
    </button>
  </nav>
);

export default function App() {
  return (
    <div className="flex h-dvh flex-col overflow-hidden bg-white font-[Roboto,sans-serif]">
      <Header />
      <main className="relative flex min-h-0 flex-1 flex-col bg-[#f5f2eb]">
        <Wallpaper />
        <MessageList />
        <Composer />
      </main>
      <NavBar />
    </div>
  );
}
